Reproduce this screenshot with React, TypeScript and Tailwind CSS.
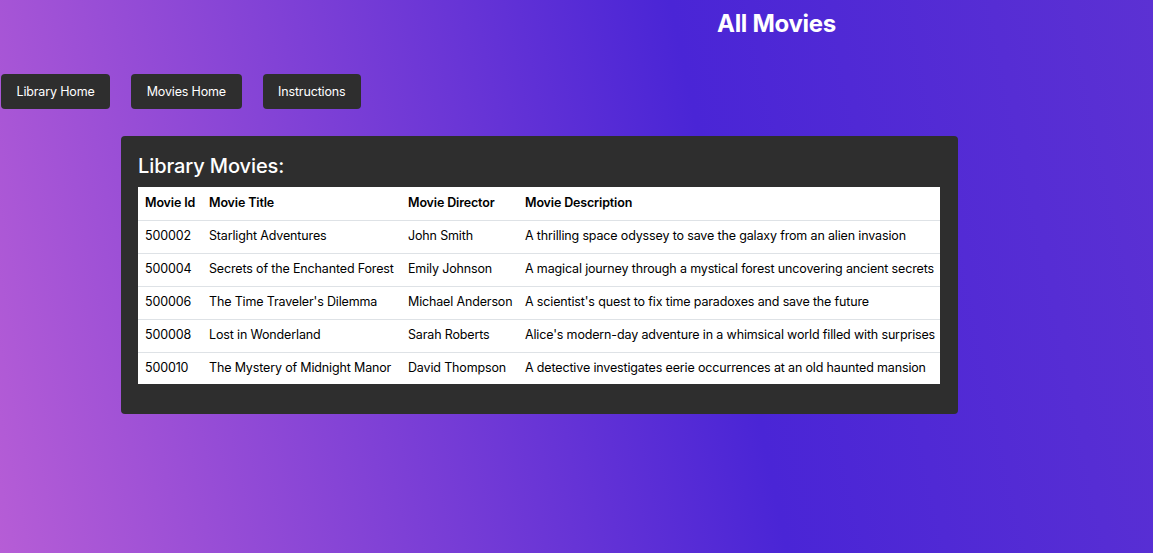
const movies = [
  { id: '500002', title: 'Starlight Adventures', director: 'John Smith', description: 'A thrilling space odyssey to save the galaxy from an alien invasion' },
  { id: '500004', title: 'Secrets of the Enchanted Forest', director: 'Emily Johnson', description: 'A magical journey through a mystical forest uncovering ancient secrets' },
  { id: '500006', title: "The Time Traveler's Dilemma", director: 'Michael Anderson', description: "A scientist's quest to fix time paradoxes and save the future" },
  { id: '500008', title: 'Lost in Wonderland', director: 'Sarah Roberts', description: "Alice's modern-day adventure in a whimsical world filled with surprises" },
  { id: '500010', title: 'The Mystery of Midnight Manor', director: 'David Thompson', description: 'A detective investigates eerie occurrences at an old haunted mansion' },
];

export default function App() {
  return (
    <div className="min-h-[553px] w-full bg-[linear-gradient(78deg,#b65dd6_0%,#4a25d6_62%,#5c31d3_100%)] font-['Inter','Helvetica',sans-serif] text-white">
      <h1 className="pl-[400px] pt-[9px] text-center text-[24px] font-bold leading-[30px] tracking-[-0.3px]">All Movies</h1>

      <div className="mt-[35px] flex gap-[21px] pl-[1px]">
        {['Library Home', 'Movies Home', 'Instructions'].map((label) => (
          <button
            key={label}
            className="h-[35px] rounded-[4px] bg-[#2e2e2e] px-[15.5px] pt-[2px] text-[12.5px] tracking-[-0.15px] text-white"
          >
            {label}
          </button>
        ))}
      </div>

      <div className="ml-[121px] mt-[27px] w-[837px] rounded-[4px] bg-[#2e2e2e] px-[17px] pb-[30px] pt-[17px]">
        <h2 className="mb-[8px] text-[20px] font-medium leading-[26px] tracking-[-0.1px]">Library Movies:</h2>
        <table className="w-[802px] table-fixed border-collapse bg-white text-left text-[12.5px] tracking-[-0.15px] text-black">
          <thead>
            <tr className="h-[33px] border-b border-[#dee2e6]">
              <th className="w-[63px] whitespace-nowrap pl-[7px] pt-px font-semibold">Movie Id</th>
              <th className="w-[200px] whitespace-nowrap pl-[8px] pt-px font-semibold">Movie Title</th>
              <th className="w-[116px] whitespace-nowrap pl-[7px] pt-px font-semibold">Movie Director</th>
              <th className="whitespace-nowrap pl-[8px] pt-px font-semibold">Movie Description</th>
            </tr>
          </thead>
          <tbody>
            {movies.map((m, i) => (
              <tr key={m.id} className={`${i < movies.length - 1 ? 'h-[33px] border-b border-[#dee2e6]' : 'h-[32px]'}`}>
                <td className="pl-[7px]">{m.id}</td>
                <td className="whitespace-nowrap pl-[8px]">{m.title}</td>
                <td className="whitespace-nowrap pl-[7px]">{m.director}</td>
                <td className="whitespace-nowrap pl-[8px]">{m.description}</td>
              </tr>
            ))}
          </tbody>
        </table>
      </div>
    </div>
  );
}
